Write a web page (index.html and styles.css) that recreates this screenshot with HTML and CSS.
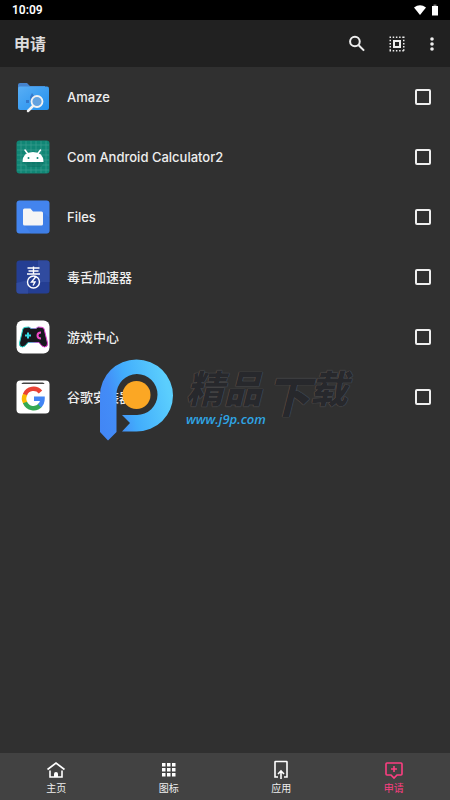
FILE: index.html
```html
<!DOCTYPE html>
<html lang="zh-CN">
<head>
    <meta charset="UTF-8">
    <meta name="viewport" content="width=device-width, initial-scale=1.0">
    <title>申请</title>
    <link rel="stylesheet" href="styles.css">
</head>
<body>
    <div class="status">
        <span>10:09</span>
        <div class="status-icons">
            <svg width="14" height="12" viewBox="0 0 14 12" fill="#fff"><path d="M1 3.500Q7-1 13 3.500L7 11Z"/></svg>
            <svg width="6" height="12" viewBox="0 0 6 12"><path fill="#fff" d="M0 2h6v9.500H0z"/><path fill="#777" d="M1.500.5h3V2h-3z"/></svg>
        </div>
    </div>

    <header class="toolbar">
        <h1>申请</h1>
        <button type="button" class="tool" aria-label="搜索">
            <svg width="20" height="20" viewBox="0 0 24 24" fill="none" stroke="#eee" stroke-width="2.400"><circle cx="9.500" cy="9" r="5.800"/><path d="M14 13.500l6.500 6.500"/></svg>
        </button>
        <button type="button" class="tool" aria-label="全选">
            <svg width="20" height="20" viewBox="0 0 20 20" fill="none" stroke="#eee" stroke-width="2"><path stroke-width="1.500" stroke-dasharray="1.500 1.700" d="M2.500 3.250h15M2.500 16.750h15M3.250 2.500v15M16.750 2.500v15"/><path d="M7 7h6v6H7z"/></svg>
        </button>
        <button type="button" class="tool tool-more" aria-label="更多">
            <svg width="20" height="20" viewBox="0 0 20 20" fill="#eee"><circle cx="10" cy="5" r="1.800"/><circle cx="10" cy="10" r="1.800"/><circle cx="10" cy="15" r="1.800"/></svg>
        </button>
    </header>

    <main class="content">
        <div class="list">
            <label class="row">
                <svg class="app-icon" viewBox="0 0 34 34">
                    <defs><linearGradient id="folder" x2="1" y2="1"><stop stop-color="#59aef5"/><stop offset="1" stop-color="#2390ee"/></linearGradient></defs>
                    <path fill="#4583cd" d="M2 5q0-2 2-2h7l3 3h15v6H2z"/>
                    <rect x="2" y="6.500" width="31" height="23.500" rx="2" fill="url(#folder)"/>
                    <path fill="#3478ca" d="M14 17l2-4 2 3 4-1-3 5-4 2zM10 20h3v3h-3z"/>
                    <path stroke="#f2f2f2" stroke-width="2.500" stroke-linecap="round" d="M17 26l-5 5"/>
                    <circle cx="21" cy="21.500" r="5.500" fill="#64a2df" stroke="#f2f2f2" stroke-width="1.800"/>
                </svg>
                <span class="app-name">Amaze</span>
                <input type="checkbox">
            </label>
            <label class="row">
                <svg class="app-icon" viewBox="0 0 34 34">
                    <rect x=".5" y=".5" width="33" height="33" rx="3" fill="#108675"/>
                    <path stroke="#43a195" stroke-width=".6" d="M5 1v32M10 1v32M15 1v32M20 1v32M25 1v32M30 1v32M1 5h32M1 10h32M1 15h32M1 20h32M1 25h32M1 30h32"/>
                    <path fill="#0a6c60" d="M7 22l5 5h13l3-5z" opacity=".5"/>
                    <path stroke="#fff" stroke-width="1.500" stroke-linecap="round" d="M9 10l3 4M24.500 10l-3 4"/>
                    <path fill="#fff" d="M6.500 22q0-10 10.500-10T27.500 22z"/>
                    <circle cx="12.500" cy="18" r="1" fill="#108675"/><circle cx="21.500" cy="18" r="1" fill="#108675"/>
                </svg>
                <span class="app-name">Com Android Calculator2</span>
                <input type="checkbox">
            </label>
            <label class="row">
                <svg class="app-icon" viewBox="0 0 34 34">
                    <rect x=".5" y=".5" width="33" height="33" rx="3" fill="#4384ee"/>
                    <path fill="#3570d4" d="M27 12l6.500 6v13q0 2.500-2.500 2.500H15L8 25z" opacity=".3"/>
                    <path fill="#f5f5f5" d="M7 10q0-1.500 1.500-1.500h6l2.500 3h8.500q1.500 0 1.500 1.500v11q0 1.500-1.500 1.500h-17Q7 25.500 7 24z"/>
                </svg>
                <span class="app-name">Files</span>
                <input type="checkbox">
            </label>
            <label class="row">
                <svg class="app-icon" viewBox="0 0 34 34">
                    <rect x=".5" y=".5" width="33" height="33" rx="3" fill="#243e93"/>
                    <path fill="#304b9f" d="M.5 23L12 20v13.500H3Q.5 33.500.5 31zM22 .5h9q2.500 0 2.500 2.500v19H22z"/>
                    <g fill="none" stroke="#fff" stroke-width="1.400">
                        <path d="M11.500 8h12M12.500 11h10M11 14h13M17.500 6.500V14"/>
                        <circle cx="17.500" cy="22" r="6"/>
                        <path d="M20 16.500L15.500 22h3.500l-2 3.500"/>
                    </g>
                </svg>
                <span class="app-name">毒舌加速器</span>
                <input type="checkbox">
            </label>
            <label class="row">
                <svg class="app-icon" viewBox="0 0 34 34">
                    <defs><linearGradient id="pad"><stop offset=".25" stop-color="#28d9cc"/><stop offset=".75" stop-color="#e33fd0"/></linearGradient></defs>
                    <rect x=".5" y=".5" width="33" height="33" rx="6" fill="#fff"/>
                    <path fill="#18181e" stroke="url(#pad)" stroke-width="1" stroke-linejoin="round" d="M7 8.500Q8 7 13 7l2 1.500h5L22 7q5 0 6 1.500L31.500 23q.500 4-3 4-2.500 0-5.500-4.500H12Q9 27 6.500 27 3 27 3.500 23z"/>
                    <path stroke="#35dce5" stroke-width="2" d="M9 15.500h6M12 12.500v6"/>
                    <path fill="none" stroke="#ee4bc9" stroke-width="2" d="M25 12.500q-3.500 0-3.500 3t3.500 3"/>
                </svg>
                <span class="app-name">游戏中心</span>
                <input type="checkbox">
            </label>
            <label class="row">
                <svg class="app-icon" viewBox="0 0 34 34">
                    <rect x=".5" y=".5" width="33" height="33" rx="4" fill="#fff"/>
                    <path fill="#444" d="M5.500 4q0-1.500 2-1.500h19q2 0 2 1.500z"/>
                    <g fill="none" stroke-width="4.500">
                        <path stroke="#fabb05" d="M9.300 14a9 9 0 0 0 0 9"/>
                        <path stroke="#e94235" d="M9 14.500a9.200 9.200 0 0 1 15.500-2.500"/>
                        <path stroke="#34a853" d="M9 22.500a9.200 9.200 0 0 0 15.500 2.500"/>
                        <path stroke="#4285f4" d="M18 18.800h8.500q0 4.500-3 7"/>
                    </g>
                </svg>
                <span class="app-name">谷歌安装器</span>
                <input type="checkbox">
            </label>
        </div>

        <div class="watermark">
            <svg width="73" height="82" viewBox="0 0 73 82">
                <defs><linearGradient id="brand" x1="0" y1=".9" x2="1" y2=".6"><stop stop-color="#4286f5"/><stop offset=".25" stop-color="#438cf7"/><stop offset=".5" stop-color="#42adfc"/><stop offset="1" stop-color="#5bcefd"/></linearGradient></defs>
                <path fill="url(#brand)" d="M0 36.500a36.500 36 0 1 1 36.500 36H22l8-8.500-8-8h14.500A20.500 20.500 0 1 0 16.500 36v37L8 81.500 0 73z"/>
                <circle cx="36.500" cy="36" r="14" fill="#fba724"/>
            </svg>
            <div class="watermark-text">
                <div>
                    <div class="watermark-name">精品</div>
                    <div class="watermark-url">www.j9p.com</div>
                </div>
                <div class="watermark-name watermark-big">下</div>
                <div class="watermark-name">载</div>
            </div>
        </div>
    </main>

    <nav class="tabs">
        <a href="#home" class="tab">
            <svg width="20" height="20" viewBox="0 0 20 20" fill="none" stroke="#fff" stroke-width="1.600"><path d="M1.500 9.500L10 3l8.500 6.500M4 10.500V17h12v-6.500"/><path fill="#fff" stroke="none" d="M8 17v-3q0-2 2-2t2 2v3z"/></svg>
            <span>主页</span>
        </a>
        <a href="#icons" class="tab">
            <svg width="20" height="20" viewBox="0 0 20 20" fill="#fff"><path d="M3 3h3.500v3.500H3zM8 3h3.500v3.500H8zM13 3h3.500v3.500H13zM3 8h3.500v3.500H3zM8 8h3.500v3.500H8zM13 8h3.500v3.500H13zM3 13h3.500v3.500H3zM8 13h3.500v3.500H8zM13 13h3.500v3.500H13z"/></svg>
            <span>图标</span>
        </a>
        <a href="#apply" class="tab">
            <svg width="20" height="20" viewBox="0 0 20 20" fill="none" stroke="#fff" stroke-width="1.600"><path d="M7 17H4V2q0-.5.500-.5h11q.5 0 .5.500v15h-3M10 19v-7.500M7 14l3-3 3 3"/></svg>
            <span>应用</span>
        </a>
        <a href="#request" class="tab active">
            <svg width="20" height="20" viewBox="0 0 20 20" fill="none" stroke="#fd3e81" stroke-width="1.600"><path d="M3 3h14q1 0 1 1v10q0 1-1 1h-4l-3 3-3-3H3q-1 0-1-1V4q0-1 1-1zM10 6v6M7 9h6"/></svg>
            <span>申请</span>
        </a>
    </nav>
</body>
</html>
```

FILE: styles.css
```css
* {
    box-sizing: border-box;
}

body {
    margin: 0;
    min-height: 100vh;
    display: flex;
    flex-direction: column;
    background-color: #303030;
    color: #eee;
    font-family: Inter, "Noto Sans CJK SC", sans-serif;
}

svg {
    display: block;
}

.status {
    display: flex;
    justify-content: space-between;
    align-items: center;
    height: 20px;
    padding: 0 12px;
    background-color: #000;
    color: #fff;
    font-family: Roboto, sans-serif;
    font-size: 12px;
    font-weight: 600;
}

.status-icons {
    display: flex;
    gap: 5px;
}

.toolbar {
    display: flex;
    align-items: center;
    height: 47px;
    padding: 0 3px 0 14px;
    background-color: #212121;
}

.toolbar h1 {
    flex: 1;
    margin: 0;
    font-size: 16px;
    line-height: 24px;
    font-weight: 700;
    color: #ddd;
}

.tool {
    display: flex;
    justify-content: center;
    width: 40px;
    padding: 0;
    border: none;
    background: none;
    cursor: pointer;
}

.tool-more {
    width: 30px;
}

.content {
    flex: 1;
    position: relative;
}

.row {
    display: flex;
    align-items: center;
    height: 60px;
    padding: 0 19px 0 16px;
    cursor: pointer;
}

.app-icon {
    width: 34px;
    height: 34px;
    margin-right: 17px;
}

.app-name {
    flex: 1;
    font-size: 13px;
    line-height: 20px;
    font-weight: 500;
}

.row input {
    appearance: none;
    width: 16px;
    height: 16px;
    margin: 0;
    border: 2px solid #eee;
    border-radius: 2px;
}

.row input:checked {
    background-color: #fd3e81;
}

/* logo laid over the list */
.watermark {
    position: absolute;
    top: 292px;
    left: 100px;
    display: flex;
    gap: 13px;
    pointer-events: none;
}

.watermark-text {
    display: flex;
    padding-top: 8px;
    font-style: italic;
}

.watermark-name {
    font-size: 38px;
    line-height: 44px;
    font-weight: 900;
    color: #27282c;
    text-shadow: 0 0 1px #777;
}

.watermark-big {
    font-size: 44px;
    line-height: 60px;
}

.watermark-url {
    font-family: "Open Sans", sans-serif;
    font-size: 13px;
    line-height: 16px;
    font-weight: 600;
    color: #2fa5e4;
}

.tabs {
    display: grid;
    grid-template-columns: repeat(4, 1fr);
    height: 47px;
    background-color: #424242;
}

.tab {
    display: flex;
    flex-direction: column;
    align-items: center;
    padding-top: 7px;
    color: #eee;
    font-size: 10px;
    line-height: 16px;
    text-decoration: none;
}

.tab.active {
    color: #fd3e81;
}
```
